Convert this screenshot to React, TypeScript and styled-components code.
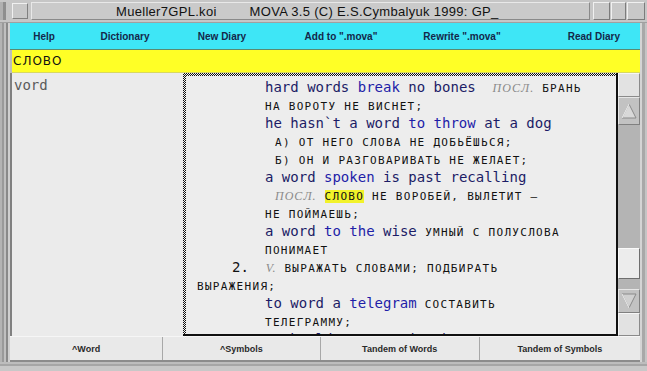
import React from "react";
import styled, { createGlobalStyle } from "styled-components";

const Global = createGlobalStyle`
  html, body { margin: 0; padding: 0; background: #bdbdbd; }
  #root { width: 647px; height: 371px; overflow: hidden; }
`;

const Window = styled.div`
  width: 647px;
  height: 371px;
  display: flex;
  flex-direction: column;
  background: #bcbcbc;
  overflow: hidden;
`;

const TitleBar = styled.div`
  height: 23px;
  display: flex;
  align-items: stretch;
  background: #c6c6c6;
  border-bottom: 1px solid #a0a0a0;
  box-sizing: border-box;
  padding: 2px 2px 2px 0;
`;

const TitleLeftEdge = styled.div`
  width: 10px;
  background: linear-gradient(90deg, #b0b0b0 0 3px, #8e8e8e 3px 6px, #c4c4c4 6px);
`;

const MenuBox = styled.div`
  width: 14px;
  margin: 1px 1px 1px 2px;
  background: #c8c8c8;
  border: 1px solid;
  border-color: #f0f0f0 #808080 #808080 #f0f0f0;
`;

const TitleCenter = styled.div`
  flex: 1;
  display: flex;
  align-items: center;
  gap: 33px;
  padding-left: 84px;
  margin: 0 2px;
  background: #cacaca;
  border: 1px solid;
  border-color: #e8e8e8 #8a8a8a #8a8a8a #e8e8e8;
  font-family: "Liberation Sans", Arial, sans-serif;
  font-size: 13px;
  letter-spacing: 0.3px;
  color: #111;
  white-space: pre;
`;

const TitleButton = styled.div<{ $w: number }>`
  width: ${(p) => p.$w}px;
  margin-left: 1px;
  background: #c8c8c8;
  border: 1px solid;
  border-color: #f0f0f0 #7c7c7c #7c7c7c #f0f0f0;
`;

const Body = styled.div`
  flex: 1;
  display: flex;
  min-height: 0;
`;

const LeftFrame = styled.div`
  width: 10px;
  background: linear-gradient(90deg, #b4b4b4 0 2px, #9a9a9a 2px 4px, #c0c0c0 4px 6px, #8a8a8a 6px 8px, #d0d0d0 8px);
`;

const RightFrame = styled.div`
  width: 7px;
  background: linear-gradient(90deg, #d4d4d4 0 2px, #a8a8a8 2px 5px, #c4c4c4 5px);
`;

const Main = styled.div`
  flex: 1;
  display: flex;
  flex-direction: column;
  min-width: 0;
`;

const MenuBar = styled.div`
  height: 26px;
  display: flex;
  align-items: center;
  background: #3ee6f6;
  border-bottom: 1px solid #5a8a70;
  font-family: "Liberation Sans", Arial, sans-serif;
  font-weight: bold;
  font-size: 10px;
  color: #14284a;
`;

const MenuItem = styled.div<{ $w: number; $right?: boolean }>`
  width: ${(p) => p.$w}px;
  box-sizing: border-box;
  text-align: ${(p) => (p.$right ? "right" : "center")};
  padding-right: ${(p) => (p.$right ? "20px" : "0")};
  white-space: pre;
`;

const InputBar = styled.div`
  height: 22px;
  display: flex;
  align-items: center;
  margin-left: 2px;
  padding-left: 1px;
  background: #ffff26;
  border-bottom: 1px solid #d8d860;
  font-family: "DejaVu Sans", sans-serif;
  font-size: 12px;
  letter-spacing: 1px;
  color: #111;
  text-transform: uppercase;
`;

const Content = styled.div`
  flex: 1;
  display: flex;
  min-height: 0;
`;

const WordList = styled.div`
  width: 173px;
  background: #ebebeb;
  border-left: 2px solid #808080;
  box-sizing: border-box;
  padding: 4px 2px;
  font-family: "DejaVu Sans Mono", monospace;
  font-size: 14px;
  color: #5a5a5a;
`;

const TextPanel = styled.div`
  width: 435px;
  position: relative;
  box-sizing: border-box;
  background: #ededed;
  border-right: 2px solid #111;
  border-bottom: 2px solid #111;
  padding: 2px 0 0 3px;
  overflow: hidden;
  &::before {
    content: "";
    position: absolute;
    left: 0;
    top: 0;
    right: 0;
    bottom: 0;
    pointer-events: none;
    background: repeating-conic-gradient(#111 0 25%, #f4f4f4 0 50%) 0 0 / 2px 2px;
    -webkit-mask: linear-gradient(#000, #000) left top / 3px 100% no-repeat,
      linear-gradient(#000, #000) left top / 100% 3px no-repeat;
    mask: linear-gradient(#000, #000) left top / 3px 100% no-repeat,
      linear-gradient(#000, #000) left top / 100% 3px no-repeat;
  }
`;

const Lines = styled.div`
  padding: 3px 0 0 11px;
`;

const Line = styled.div<{ $indent: number }>`
  height: 18px;
  line-height: 18px;
  padding-left: ${(p) => p.$indent}px;
  white-space: pre;
`;

const En = styled.span<{ $bright?: boolean }>`
  font-family: "DejaVu Sans Mono", monospace;
  font-size: 14px;
  color: ${(p) => (p.$bright ? "#1e1ea8" : "#1c1c66")};
`;

const Ru = styled.span<{ $hl?: boolean }>`
  font-family: "DejaVu Sans Mono", monospace;
  font-size: 11px;
  text-transform: uppercase;
  letter-spacing: 1.3px;
  color: #111;
  background: ${(p) => (p.$hl ? "#f2f22a" : "transparent")};
`;

const Label = styled.span`
  font-family: "Liberation Serif", serif;
  font-style: italic;
  font-size: 12px;
  text-transform: uppercase;
  letter-spacing: 1px;
  color: #8a8a8a;
`;

const Num = styled.span`
  font-family: "DejaVu Sans Mono", monospace;
  font-size: 14px;
  color: #111;
`;

const Scrollbar = styled.div`
  width: 22px;
  display: flex;
  flex-direction: column;
  background: #b6b6b6;
`;

const ScrollBlank = styled.div<{ $h: number }>`
  height: ${(p) => p.$h}px;
  background: #e2e2e2;
  border: 1px solid;
  border-color: #f6f6f6 #8a8a8a #8a8a8a #f6f6f6;
  box-sizing: border-box;
`;

const ScrollArrow = styled.div<{ $h: number }>`
  height: ${(p) => p.$h}px;
  background: #c2c2c2;
  border: 1px solid;
  border-color: #e6e6e6 #808080 #808080 #e6e6e6;
  box-sizing: border-box;
  display: flex;
  align-items: center;
  justify-content: center;
`;

const ScrollTrack = styled.div<{ $h?: number }>`
  ${(p) => (p.$h ? `height: ${p.$h}px;` : "flex: 1;")}
  background: #b4b4b4;
`;

const ScrollThumb = styled.div`
  height: 31px;
  background: #ececec;
  border: 1px solid;
  border-color: #fafafa #6e6e6e #6e6e6e #fafafa;
  box-sizing: border-box;
`;

const Tabs = styled.div`
  height: 26px;
  display: flex;
  background: #e9e9e9;
  border-top: 1px solid #f6f6f6;
  border-bottom: 2px solid #8c8c8c;
  box-sizing: border-box;
  font-family: "Liberation Sans", Arial, sans-serif;
  font-weight: bold;
  font-size: 9px;
  color: #2a2a2a;
`;

const Tab = styled.div<{ $w: number }>`
  width: ${(p) => p.$w}px;
  display: flex;
  align-items: center;
  justify-content: center;
  border-right: 1px solid #a8a8a8;
  white-space: pre;
  &:last-child { border-right: none; }
`;

const BottomStrip = styled.div`
  height: 9px;
  background: linear-gradient(#bdbdbd 0 2px, #a6a6a6 2px 4px, #c8c8c8 4px);
`;

const UpArrow = () => (
  <svg width="16" height="18" viewBox="0 0 16 18">
    <polygon points="8,2 15,16 1,16" fill="#d8d8d8" stroke="#8a8a8a" strokeWidth="1" />
    <line x1="8" y1="2" x2="1" y2="16" stroke="#f4f4f4" strokeWidth="1" />
  </svg>
);

const DownArrow = () => (
  <svg width="16" height="18" viewBox="0 0 16 18">
    <polygon points="1,2 15,2 8,16" fill="#d0d0d0" stroke="#8a8a8a" strokeWidth="1" />
    <line x1="1" y1="2" x2="8" y2="16" stroke="#f4f4f4" strokeWidth="1" />
  </svg>
);

export default function App() {
  return (
    <>
      <Global />
      <Window>
        <TitleBar>
          <TitleLeftEdge />
          <MenuBox />
          <TitleCenter>
            <span>Mueller7GPL.koi</span>
            <span>MOVA 3.5 (C) E.S.Cymbalyuk 1999: GP_</span>
          </TitleCenter>
          <TitleButton $w={15} />
          <TitleButton $w={13} />
          <TitleButton $w={16} />
        </TitleBar>
        <Body>
          <LeftFrame />
          <Main>
            <MenuBar>
              <MenuItem $w={68}>Help</MenuItem>
              <MenuItem $w={94}>Dictionary</MenuItem>
              <MenuItem $w={100}>New Diary</MenuItem>
              <MenuItem $w={138}>Add to ".mova"</MenuItem>
              <MenuItem $w={104}>Rewrite ".mova"</MenuItem>
              <MenuItem $w={126} $right>Read Diary</MenuItem>
            </MenuBar>
            <InputBar>слово</InputBar>
            <Content>
              <WordList>vord</WordList>
              <TextPanel>
                <Lines>
                  <Line $indent={68}>
                    <En>hard words </En>
                    <En $bright>break</En>
                    <En> no bones  </En>
                    <Label>посл.</Label>
                    <Ru> брань</Ru>
                  </Line>
                  <Line $indent={68}>
                    <Ru>на вороту не виснет;</Ru>
                  </Line>
                  <Line $indent={68}>
                    <En>he hasn`t a word </En>
                    <En $bright>to throw</En>
                    <En> at a dog</En>
                  </Line>
                  <Line $indent={78}>
                    <Ru>а) от него слова не добьёшься;</Ru>
                  </Line>
                  <Line $indent={78}>
                    <Ru>б) он и разговаривать не желает;</Ru>
                  </Line>
                  <Line $indent={68}>
                    <En>a word </En>
                    <En $bright>spoken</En>
                    <En> is past recalling</En>
                  </Line>
                  <Line $indent={78}>
                    <Label>посл.</Label>
                    <Ru> </Ru>
                    <Ru $hl>слово</Ru>
                    <Ru> не воробей, вылетит –</Ru>
                  </Line>
                  <Line $indent={68}>
                    <Ru>не поймаешь;</Ru>
                  </Line>
                  <Line $indent={68}>
                    <En>a word </En>
                    <En $bright>to the</En>
                    <En> wise </En>
                    <Ru>умный с полуслова</Ru>
                  </Line>
                  <Line $indent={68}>
                    <Ru>понимает</Ru>
                  </Line>
                  <Line $indent={35}>
                    <Num>2.  </Num>
                    <Label>v.</Label>
                    <Ru> выражать словами; подбирать</Ru>
                  </Line>
                  <Line $indent={0}>
                    <Ru>выражения;</Ru>
                  </Line>
                  <Line $indent={68}>
                    <En>to word a </En>
                    <En $bright>telegram</En>
                    <Ru> составить</Ru>
                  </Line>
                  <Line $indent={68}>
                    <Ru>телеграмму;</Ru>
                  </Line>
                  <Line $indent={68}>
                    <En>I should not put it that way</En>
                  </Line>
                </Lines>
              </TextPanel>
              <Scrollbar>
                <ScrollBlank $h={24} />
                <ScrollArrow $h={28}>
                  <UpArrow />
                </ScrollArrow>
                <ScrollTrack />
                <ScrollThumb />
                <ScrollTrack $h={10} />
                <ScrollArrow $h={24}>
                  <DownArrow />
                </ScrollArrow>
                <ScrollBlank $h={23} />
              </Scrollbar>
            </Content>
            <Tabs>
              <Tab $w={153}>^Word</Tab>
              <Tab $w={157}>^Symbols</Tab>
              <Tab $w={159}>Tandem of Words</Tab>
              <Tab $w={161}>Tandem of Symbols</Tab>
            </Tabs>
          </Main>
          <RightFrame />
        </Body>
        <BottomStrip />
      </Window>
    </>
  );
}
